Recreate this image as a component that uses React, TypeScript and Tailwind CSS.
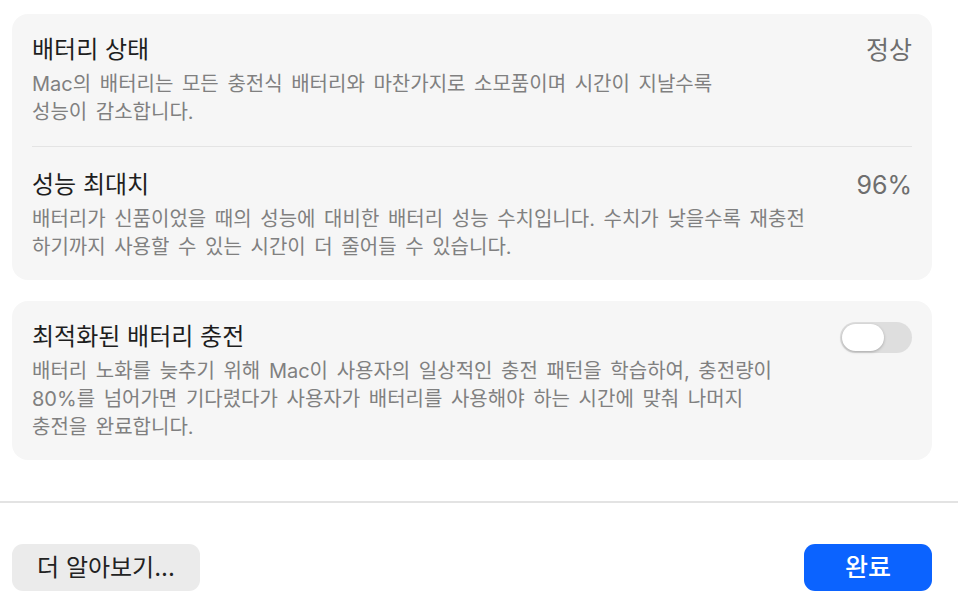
import React, { useState } from 'react';

const font = { fontFamily: 'Inter, "Noto Sans CJK KR", sans-serif' };

const InfoRow: React.FC<{
  title: string;
  value?: string;
  lines: string[];
  right?: React.ReactNode;
  className?: string;
}> = ({ title, value, lines, right, className = '' }) => (
  <div className={`flex items-start justify-between ${className}`}>
    <div className="flex flex-col">
      <div className="text-[24px] leading-[28px] text-[#1e1e1e]">{title}</div>
      <div className="mt-[6px] text-[20px] leading-[28px] text-[#808080] whitespace-nowrap [word-spacing:3px]">
        {lines.map((l, i) => (
          <div key={i}>{l}</div>
        ))}
      </div>
    </div>
    {value && <div className="text-[25px] leading-[28px] text-[#6e6e6e]">{value}</div>}
    {right}
  </div>
);

const Toggle: React.FC<{ on: boolean; onChange: (v: boolean) => void }> = ({ on, onChange }) => (
  <button
    onClick={() => onChange(!on)}
    className={`mt-[-1px] flex h-[31px] w-[72px] shrink-0 items-center rounded-full px-[2px] ${
      on ? 'justify-end bg-[#0b63ff]' : 'justify-start bg-[#dedede]'
    }`}
  >
    <span className="h-[27px] w-[42px] rounded-full bg-white shadow-[0_1px_3px_rgba(0,0,0,0.25)]" />
  </button>
);

export default function App() {
  const [optimized, setOptimized] = useState(false);

  return (
    <div className="h-[612px] w-[958px] overflow-hidden bg-white" style={font}>
      <div className="pl-[12px] pr-[26px] pt-[14px]">
        {/* Battery health card */}
        <div className="rounded-[16px] bg-[#f6f6f6] px-[20px]">
          <InfoRow
            className="pt-[22px] pb-[20px]"
            title="배터리 상태"
            value="정상"
            lines={[
              'Mac의 배터리는 모든 충전식 배터리와 마찬가지로 소모품이며 시간이 지날수록',
              '성능이 감소합니다.',
            ]}
          />
          <div className="h-px bg-[#e4e4e4]" />
          <InfoRow
            className="pt-[24px] pb-[19px]"
            title="성능 최대치"
            value="96%"
            lines={[
              '배터리가 신품이었을 때의 성능에 대비한 배터리 성능 수치입니다. 수치가 낮을수록 재충전',
              '하기까지 사용할 수 있는 시간이 더 줄어들 수 있습니다.',
            ]}
          />
        </div>

        {/* Optimized charging card */}
        <div className="mt-[21px] rounded-[16px] bg-[#f6f6f6] px-[20px] pt-[22px] pb-[19px]">
          <InfoRow
            title="최적화된 배터리 충전"
            lines={[
              '배터리 노화를 늦추기 위해 Mac이 사용자의 일상적인 충전 패턴을 학습하여, 충전량이',
              '80%를 넘어가면 기다렸다가 사용자가 배터리를 사용해야 하는 시간에 맞춰 나머지',
              '충전을 완료합니다.',
            ]}
            right={<Toggle on={optimized} onChange={setOptimized} />}
          />
        </div>
      </div>

      <div className="mt-[41px] h-[2px] bg-[#e3e3e3]" />

      <div className="flex items-center justify-between pl-[12px] pr-[26px] pt-[41px]">
        <button className="flex h-[47px] w-[188px] items-center justify-center rounded-[11px] bg-[#ebebeb] text-[24px] text-[#222222]">
          더 알아보기...
        </button>
        <button className="flex h-[47px] w-[128px] items-center justify-center rounded-[11px] bg-[#0b63ff] text-[25px] font-medium text-white">
          완료
        </button>
      </div>
    </div>
  );
}
